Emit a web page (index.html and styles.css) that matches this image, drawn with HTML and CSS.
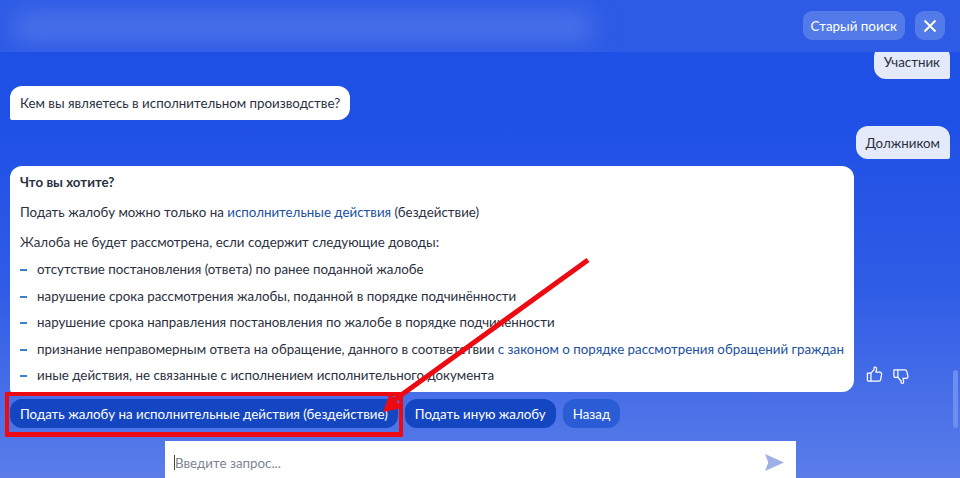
FILE: index.html
```html
<!DOCTYPE html>
<html lang="ru">
<head>
    <meta charset="UTF-8">
    <meta name="viewport" content="width=device-width, initial-scale=1.0">
    <title>Поиск</title>
    <link rel="stylesheet" href="styles.css">
</head>
<body>

<div class="page">
    <div class="top-bar">
        <button class="top-btn">Старый поиск</button>
        <button class="top-btn close-btn">
            <svg width="14" height="14" viewBox="0 0 14 14"><path d="M1.500 1.500l11 11M12.500 1.500l-11 11" stroke="#fff" stroke-width="2" fill="none"/></svg>
        </button>
    </div>

    <div class="messages">
        <div class="bubble user first-bubble">Участник</div>
        <div class="bubble bot">Кем вы являетесь в исполнительном производстве?</div>
        <div class="bubble user second-bubble">Должником</div>

        <div class="card-row">
            <div class="card">
                <p class="card-title">Что вы хотите?</p>
                <p>Подать жалобу можно только на <a href="#">исполнительные действия</a> (бездействие)</p>
                <p class="list-title">Жалоба не будет рассмотрена, если содержит следующие доводы:</p>
                <ul>
                    <li>отсутствие постановления (ответа) по ранее поданной жалобе</li>
                    <li>нарушение срока рассмотрения жалобы, поданной в порядке подчинённости</li>
                    <li>нарушение срока направления постановления по жалобе в порядке подчинённости</li>
                    <li>признание неправомерным ответа на обращение, данного в соответствии <a href="#">с законом о порядке рассмотрения обращений граждан</a></li>
                    <li>иные действия, не связанные с исполнением исполнительного документа</li>
                </ul>
            </div>
            <div class="rating">
                <svg class="thumb-up" width="17" height="16" viewBox="0 0 18 18" fill="none" stroke="#fff" stroke-width="1.400" stroke-linejoin="round"><path d="M1 8h4v9H2.500A1.500 1.500 0 0 1 1 15.500z"/><path d="M5 8l3.500-4V2.200C8.500 1 10.800 .7 11.300 2.500c.3 1.300-.2 3-.8 4.500h4.500c1.400 0 2.200 1 2 2.200l-1.100 6.100c-.2 1.100-1 1.700-2 1.700H5"/></svg>
                <svg width="16" height="16" viewBox="0 0 18 18" fill="none" stroke="#fff" stroke-width="1.400" stroke-linejoin="round"><path d="M1 1h12.500c1 0 1.800.6 2 1.700l1.300 5.600c.2 1.200-.6 2.200-2 2.200h-3.600c.5 1.500 1 3.200.7 4.500-.5 1.800-2.800 1.500-2.800.3v-1.800L5.500 9.500H2.500A1.500 1.500 0 0 1 1 8z"/><path d="M5.500 1v8.500"/></svg>
            </div>
        </div>

        <div class="actions">
            <button class="action primary">Подать жалобу на исполнительные действия (бездействие)</button>
            <button class="action primary">Подать иную жалобу</button>
            <button class="action back">Назад</button>
        </div>
    </div>

    <div class="input-row">
        <div class="input-box">
            <span class="caret"></span><span class="placeholder">Введите запрос...</span>
            <svg class="send" width="19" height="19" viewBox="0 0 20 20"><path d="M0 1l20 9-20 9 3.500-9z" fill="#9fb0e6"/></svg>
        </div>
    </div>

    <div class="scroll-thumb"></div>

    <!-- пометки поверх скриншота -->
    <div class="red-frame"></div>
    <svg class="red-arrow" width="960" height="478" viewBox="0 0 960 478">
        <path d="M588 260L393 401" stroke="#ee0a12" stroke-width="5" fill="none"/>
        <path d="M383 412l7-19 12 15z" fill="#ee0a12"/>
    </svg>
</div>

</body>
</html>
```

FILE: styles.css
```css
* {
    box-sizing: border-box;
}
html, body {
    margin: 0;
    height: 100%;
}
body {
    font-family: Lato, "Noto Sans", sans-serif;
    font-size: 13.33px;
    color: #2b3040;
}
.page {
    position: relative;
    width: 960px;
    height: 478px;
    overflow: hidden;
    display: flex;
    flex-direction: column;
    background: linear-gradient(to bottom, #1f50e6 0%, #1f50e6 25%, #2f5ce6 60%, #5a7de9 100%);
}
.top-bar {
    position: relative;
    height: 52px;
    flex-shrink: 0;
    display: flex;
    justify-content: flex-end;
    align-items: flex-start;
    gap: 10px;
    padding: 11px 15px 0 0;
    overflow: hidden;
    background: #2d5be6;
}
/* размытая полоса под шапкой */
.top-bar::before {
    content: "";
    position: absolute;
    left: 15px;
    top: 12px;
    width: 575px;
    height: 30px;
    background: #4b72ea;
    filter: blur(12px);
}
.top-btn {
    position: relative;
    height: 29px;
    padding: 0 8px;
    border: none;
    border-radius: 9px;
    background: #527ae9;
    color: #fff;
    font: inherit;
    font-size: 13.4px;
}
.close-btn {
    width: 30px;
    padding: 0;
    display: flex;
    align-items: center;
    justify-content: center;
}
.messages {
    flex: 1;
    min-height: 0;
    overflow: hidden;
    display: flex;
    flex-direction: column;
    align-items: flex-start;
    padding: 0 10px;
    gap: 7px;
}
.bubble {
    padding: 8px 10px;
    line-height: 18px;
    height: 34px;
    border-radius: 12px;
}
.bubble.bot {
    background: #fff;
    border-bottom-left-radius: 2px;
}
.bubble.user {
    align-self: flex-end;
    background: #e4eafa;
    border-bottom-right-radius: 2px;
}
.first-bubble {
    margin-top: -7px;
}
.bubble.second-bubble {
    height: 33px;
    margin-top: -1px;
}
.card-row {
    display: flex;
    align-items: flex-end;
    gap: 12px;
}
.card {
    width: 844px;
    height: 226px;
    padding: 7px 10px;
    background: #fff;
    border-radius: 12px;
    border-bottom-left-radius: 2px;
    line-height: 18px;
}
.card p {
    margin: 0 0 12px;
}
.card .card-title {
    font-weight: 700;
}
.card .list-title {
    margin-bottom: 9px;
}
.card a {
    color: #20509e;
    text-decoration: none;
}
.card ul {
    list-style: none;
    margin: 0;
    padding: 0;
}
.card li {
    position: relative;
    padding-left: 17px;
    margin-bottom: 8.6px;
    white-space: nowrap;
}
.card li::before {
    content: "";
    position: absolute;
    left: 0;
    top: 9px;
    width: 7px;
    height: 2px;
    background: #3f7fcb;
}
.rating {
    display: flex;
    align-items: flex-end;
    gap: 10px;
    padding-bottom: 7px;
}
.thumb-up {
    margin-bottom: 3px;
}
.actions {
    display: flex;
    gap: 7px;
}
.action {
    height: 29px;
    padding: 0 10px;
    border: none;
    border-radius: 12px;
    color: #fff;
    font: inherit;
    font-size: 13.33px;
}
.action.primary {
    background: #1446c2;
}
.action.back {
    background: #2a5cd6;
}
.input-row {
    height: 37px;
    flex-shrink: 0;
    display: flex;
    justify-content: center;
}
.input-box {
    width: 631px;
    margin-left: 1px;
    display: flex;
    align-items: center;
    padding: 6px 12px 0 9px;
    background: #fff;
}
.caret {
    width: 1px;
    height: 15px;
    background: #444;
}
.placeholder {
    flex: 1;
    color: #7d8494;
}
.scroll-thumb {
    position: absolute;
    right: 2px;
    top: 370px;
    width: 5px;
    height: 58px;
    border-radius: 3px;
    background: #6c8eee;
}
.red-frame {
    position: absolute;
    left: 5px;
    top: 392px;
    width: 398px;
    height: 45px;
    border: 4px solid #ee0a12;
    border-bottom-width: 5px;
}
.red-arrow {
    position: absolute;
    left: 0;
    top: 0;
    pointer-events: none;
}
```
